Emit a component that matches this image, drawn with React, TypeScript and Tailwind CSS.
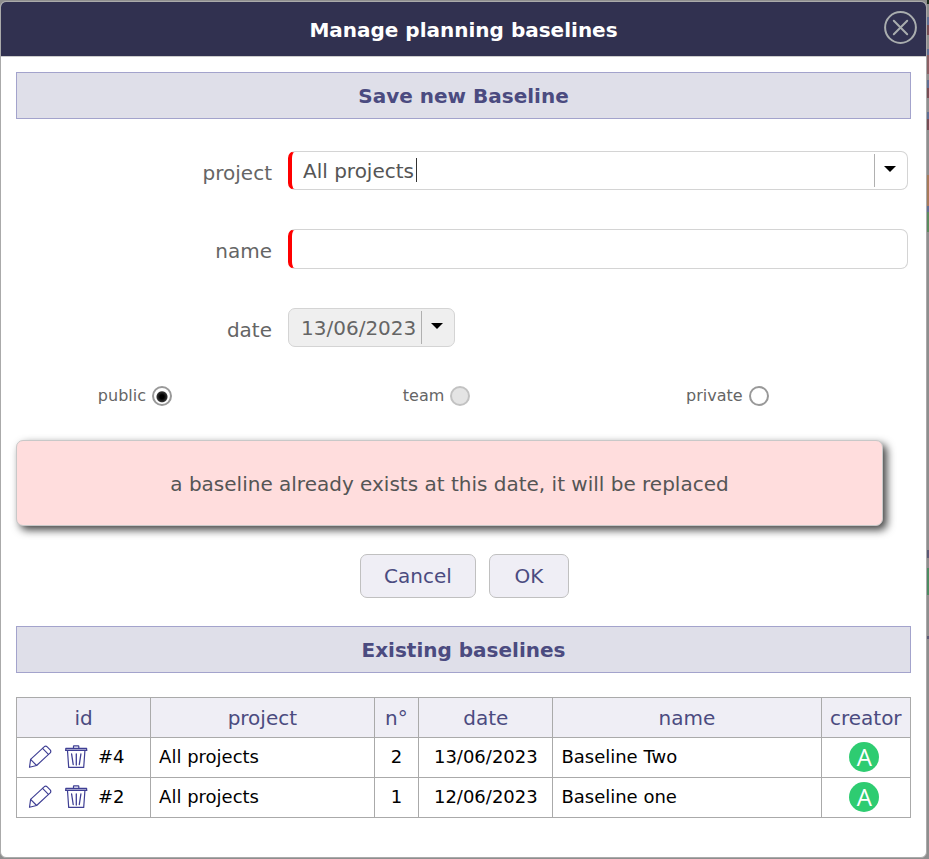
import { useState } from "react";

type Baseline = {
  id: string;
  project: string;
  number: number;
  date: string;
  name: string;
  creator: string;
};

const baselines: Baseline[] = [
  { id: "#4", project: "All projects", number: 2, date: "13/06/2023", name: "Baseline Two", creator: "A" },
  { id: "#2", project: "All projects", number: 1, date: "12/06/2023", name: "Baseline one", creator: "A" },
];

const columns = [
  { label: "id", width: "w-[15%]" },
  { label: "project", width: "w-[25%]" },
  { label: "n°", width: "w-[5%]" },
  { label: "date", width: "w-[15%]" },
  { label: "name", width: "w-[30%]" },
  { label: "creator", width: "w-[10%]" },
];

const privacyOptions = [
  { value: "public", disabled: false },
  { value: "team", disabled: true },
  { value: "private", disabled: false },
];

// Slices of the dimmed planning page visible beside the dialog
const backdrop = [
  ["h-[4px]", "bg-[#1c2b1c]"],
  ["h-[13px]", "bg-[#8e8e8e]"],
  ["h-[8px]", "bg-[#5f6f93]"],
  ["h-[10px]", "bg-[#754e55]"],
  ["h-[14px]", "bg-[#8e8e8e]"],
  ["h-[6px]", "bg-[#5f6f93]"],
  ["h-[19px]", "bg-[#8a6064]"],
  ["h-[6px]", "bg-[#8e8e8e]"],
  ["h-[8px]", "bg-[#5f6f93]"],
  ["h-[10px]", "bg-[#754e55]"],
  ["h-[14px]", "bg-[#8e8e8e]"],
  ["h-[7px]", "bg-[#5f6f93]"],
  ["h-[11px]", "bg-[#754e55]"],
  ["h-[45px]", "bg-[#8e8e8e]"],
  ["h-[31px]", "bg-[#a67a5a]"],
  ["h-[6px]", "bg-[#5f6f93]"],
  ["h-[20px]", "bg-[#5a8a5e]"],
  ["h-[318px]", "bg-[#8e8e8e]"],
  ["h-[8px]", "bg-[#5a5a75]"],
  ["h-[10px]", "bg-[#8e8e8e]"],
  ["h-[27px]", "bg-[#4c8a62]"],
  ["h-[41px]", "bg-[#8e8e8e]"],
  ["h-[3px]", "bg-[#5a5a75]"],
];

function CloseIcon() {
  return (
    <svg viewBox="0 0 34 34" className="size-[34px]" fill="none" stroke="#a9adae" strokeWidth="2" strokeLinecap="round" aria-hidden="true">
      <circle cx="16.5" cy="16.5" r="15.4" strokeWidth="2" />
      <path d="M9.8 9.8 23.2 23.2M23.2 9.8 9.8 23.2" />
    </svg>
  );
}

function PencilIcon() {
  return (
    <svg viewBox="0 0 24 24" className="size-6" fill="none" stroke="#3f3f94" strokeWidth="1.15" strokeLinejoin="round" strokeLinecap="round" aria-hidden="true">
      <path d="M1.5 22.3 2.6 14.4 16.4 1.6Q17.9 .6 19.2 1.8L22.4 5.2Q23.3 6.5 22.2 7.8L8.6 20.5Z" />
      <path d="M2.6 14.4 8.6 20.5M14.6 3.3 20.4 9.4" />
    </svg>
  );
}

function TrashIcon() {
  return (
    <svg viewBox="0 0 24 24" className="size-6" fill="none" stroke="#3f3f94" strokeWidth="1.2" strokeLinejoin="round" strokeLinecap="round" aria-hidden="true">
      <path d="M9.5 3.2V1.4Q9.5 .8 10 .8H14.3Q14.8 .8 14.8 1.4V3.2" />
      <path d="M1.8 3.3H22.6V5.5H1.8Z" />
      <path d="M1.8 5.2H22.6" strokeWidth="1.6" />
      <path d="M3.5 5.8 4.7 22.4H19.7L20.9 5.8" />
      <path d="M7.6 9 9.2 19.5M12.3 9V20M16.9 9 15.3 19.5" strokeWidth="1.3" />
    </svg>
  );
}

function Arrow() {
  return (
    <span className="pointer-events-none absolute inset-y-[3px] right-0 flex w-[34px] items-center border-l border-[#b0b0b0] pb-[3px] pl-[9px]" aria-hidden="true">
      <svg viewBox="0 0 12 6" className="h-[6px] w-[12px]">
        <path d="M0 0H12L6 6Z" fill="#000" />
      </svg>
    </span>
  );
}

function SectionTitle({ children }: { children: string }) {
  return (
    <h2 className="border border-[#a3a3cc] bg-[#dfdfe9] pt-[9px] pb-[7px] text-center text-[20px] leading-[29px] font-bold text-[#4b4b80]">
      {children}
    </h2>
  );
}

export default function App() {
  const [project, setProject] = useState("All projects");
  const [name, setName] = useState("");
  const [date, setDate] = useState("13/06/2023");
  const [privacy, setPrivacy] = useState("public");

  return (
    <div className="flex min-h-screen bg-[#8e8e8e] font-['Verdana','DejaVu_Sans',sans-serif]">
      <main className="mt-px mb-px flex-1 overflow-hidden rounded-[6px] border border-[#aaaaaa] bg-white">
        <header className="flex h-[55px] items-center border-b border-[#cccccc] bg-[#313150] pr-[8px] pl-[42px]">
          <h1 className="flex-1 pt-px text-center text-[20px] font-bold text-white">Manage planning baselines</h1>
          <button type="button" aria-label="Close" className="mb-[3px]">
            <CloseIcon />
          </button>
        </header>

        <form className="px-[15px] pt-[15px]" onSubmit={(e) => e.preventDefault()}>
          <SectionTitle>Save new Baseline</SectionTitle>

          <div className="mt-8 mr-[3px] grid grid-cols-[256px_1fr] gap-x-4 gap-y-[39px] text-[20px] text-[#656565]">
            <label htmlFor="project" className="pt-[6px] text-right leading-[33px]">project</label>
            <div className="relative h-[39px]">
              <select
                id="project"
                value={project}
                onChange={(e) => setProject(e.target.value)}
                className="h-full w-full appearance-none rounded-[7px] border border-l-4 border-[#d4d4d4] border-l-[#ff0000] bg-white pl-[11px] text-[#555555] outline-none"
              >
                <option>All projects</option>
              </select>
              <span className="absolute top-[7px] left-[128px] h-6 w-px bg-[#333333]" aria-hidden="true" />
              <Arrow />
            </div>

            <label htmlFor="name" className="pt-[6px] text-right leading-[33px]">name</label>
            <input
              id="name"
              value={name}
              onChange={(e) => setName(e.target.value)}
              className="h-10 w-full rounded-[7px] border border-l-4 border-[#d4d4d4] border-l-[#ff0000] bg-white px-[11px] outline-none"
            />

            <label htmlFor="date" className="pt-[6px] text-right leading-[33px]">date</label>
            <div className="relative h-[39px] w-[167px]">
              <select
                id="date"
                value={date}
                onChange={(e) => setDate(e.target.value)}
                className="h-full w-full appearance-none rounded-[7px] border border-[#d4d4d4] bg-[#efefef] pl-3 text-[#656565] outline-none"
              >
                <option>13/06/2023</option>
              </select>
              <Arrow />
            </div>
          </div>

          <fieldset className="mt-[38px] grid grid-cols-3" aria-label="Privacy">
            {privacyOptions.map(({ value, disabled }) => (
              <div key={value} className="flex h-[22px] items-center gap-[6px]">
                <label htmlFor={value} className="w-[130px] text-right text-[16px] leading-[22px] text-[#656565]">{value}</label>
                <input
                  type="radio"
                  id={value}
                  name="privacy"
                  value={value}
                  disabled={disabled}
                  checked={privacy === value}
                  onChange={() => setPrivacy(value)}
                  className="size-5 appearance-none rounded-full border-2 border-[#999999] bg-white checked:bg-[radial-gradient(circle_at_50%_55%,#000_0_2px,#333_5px,#fff_6px)] disabled:border-[#c2c2c2] disabled:bg-[#e4e4e4]"
                />
              </div>
            ))}
          </fieldset>

          <p role="alert" className="mt-[33px] mr-[28px] rounded-[7px] border border-[#c8c8c8] bg-[#ffdddd] pt-[29px] pb-[26px] text-center text-[20px] leading-[29px] text-[#555555] shadow-[4px_4px_8px_#444444]">
            a baseline already exists at this date, it will be replaced
          </p>

          <div className="mt-7 flex justify-center gap-[13px] pl-[2px] text-[20px] text-[#4b4b80]">
            <button type="button" className="h-11 w-[116px] rounded-[7px] border border-[#c0c0c0] bg-[#efeef5]">Cancel</button>
            <button type="submit" className="h-11 w-20 rounded-[7px] border border-[#c0c0c0] bg-[#efeef5]">OK</button>
          </div>
        </form>

        <section className="px-[15px] pt-7 pb-[39px]">
          <SectionTitle>Existing baselines</SectionTitle>

          <table className="mt-6 w-full table-fixed border-collapse text-[18px] leading-6 text-black">
            <thead>
              <tr className="h-10 bg-[#efeef5] text-[20px] text-[#4b4b80]">
                {columns.map((c) => (
                  <th key={c.label} scope="col" className={`border border-[#aaaaaa] font-normal ${c.width}`}>{c.label}</th>
                ))}
              </tr>
            </thead>
            <tbody>
              {baselines.map((b) => (
                <tr key={b.id} className="h-10">
                  <td className="border border-[#aaaaaa] pb-px">
                    <div className="flex items-center pl-[11px]">
                      <button type="button" aria-label={`Edit ${b.id}`}><PencilIcon /></button>
                      <button type="button" aria-label={`Delete ${b.id}`} className="mr-[10px] ml-3"><TrashIcon /></button>
                      {b.id}
                    </div>
                  </td>
                  <td className="border border-[#aaaaaa] px-2 pb-[2px]">{b.project}</td>
                  <td className="border border-[#aaaaaa] pb-[2px] text-center">{b.number}</td>
                  <td className="border border-[#aaaaaa] pb-[2px] text-center">{b.date}</td>
                  <td className="border border-[#aaaaaa] px-2 pb-[2px]">{b.name}</td>
                  <td className="border border-[#aaaaaa] pr-[3px] pb-[2px]">
                    <span className="mx-auto flex size-[30px] items-center justify-center rounded-full bg-[#2ecc71] font-['Open_Sans',sans-serif] text-[24px] leading-[30px] font-medium text-white">{b.creator}</span>
                  </td>
                </tr>
              ))}
            </tbody>
          </table>
        </section>
      </main>
      <div className="w-[2px]" aria-hidden="true">
        {backdrop.map(([height, color], i) => (
          <div key={i} className={`${height} ${color}`} />
        ))}
      </div>
    </div>
  );
}
